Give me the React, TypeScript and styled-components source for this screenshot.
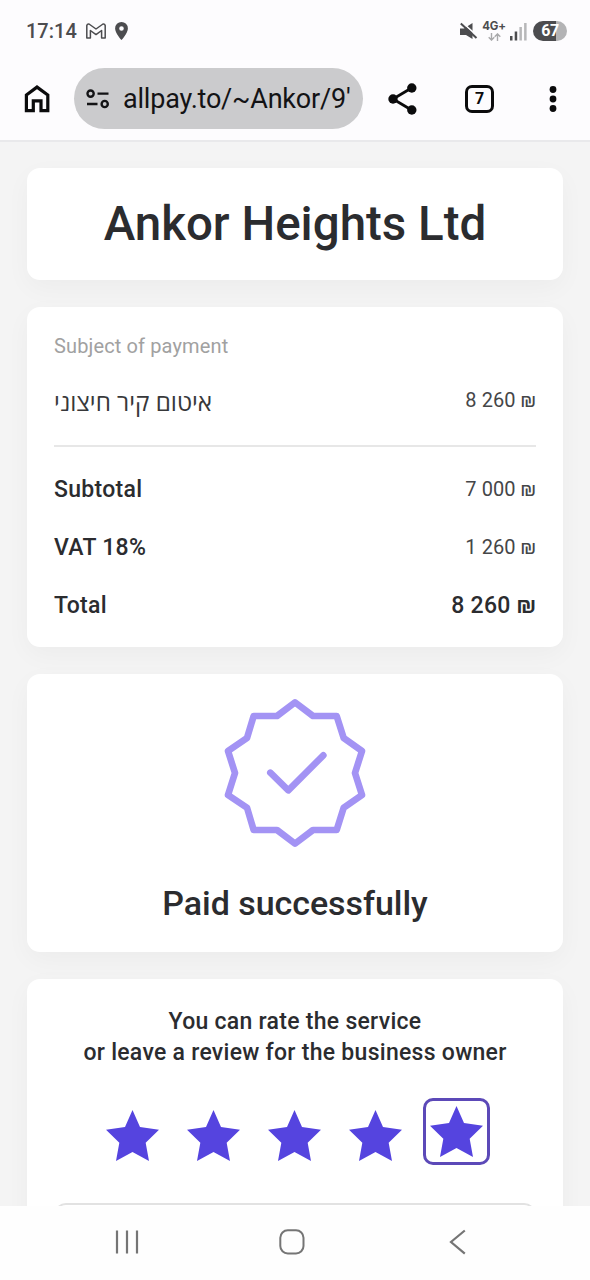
import React from "react";
import styled, { createGlobalStyle } from "styled-components";

const GlobalStyle = createGlobalStyle`
  *, *::before, *::after { box-sizing: border-box; }
  body { margin: 0; background: #f4f4f4; }
  svg { display: block; flex: none; }
`;

const Screen = styled.div`
  width: 590px;
  height: 1280px;
  display: flex;
  flex-direction: column;
  overflow: hidden;
  background: #f4f4f4;
  color: #2b2c2f;
  font-family: Roboto, "Open Sans", sans-serif;
`;

const StatusBar = styled.header`
  flex: none;
  height: 62px;
  padding: 0 23px 0 26px;
  display: flex;
  align-items: center;
  background: #fdfcfe;
  color: #4c4c4f;
`;

const Clock = styled.span`
  width: 51px;
  margin-right: 9px;
  font: 500 20px/24px Roboto, sans-serif;
  white-space: nowrap;
`;

const StatusIcons = styled.div<{ $gap: number }>`
  display: flex;
  align-items: center;
  gap: ${({ $gap }) => $gap}px;
`;

const Spacer = styled.div`
  flex: 1;
`;

const Network = styled.div`
  width: 24px;
  display: flex;
  flex-direction: column;
  align-items: center;
  gap: 1px;
  font: 700 11.5px/11px Inter, sans-serif;
  letter-spacing: -0.2px;
  white-space: nowrap;
`;

const Battery = styled.div`
  width: 34px;
  height: 20px;
  margin-left: 2px;
  border-radius: 10px;
  display: flex;
  align-items: center;
  justify-content: center;
  background: linear-gradient(90deg, #4c4c4f 67%, #b3b3b5 67%);
  color: #fff;
  font: 700 16px/20px Roboto, sans-serif;
  letter-spacing: -0.5px;
`;

const Toolbar = styled.nav`
  flex: none;
  height: 80px;
  padding: 7px 33px 12px 23px;
  display: flex;
  align-items: center;
  background: #fdfcfe;
  border-bottom: 2px solid #e9e9eb;
`;

const AddressBar = styled.div`
  width: 289px;
  height: 61px;
  margin: 0 25px 0 23px;
  padding: 0 10px 0 12px;
  border-radius: 31px;
  display: flex;
  align-items: center;
  gap: 13px;
  background: #cbcbcd;
  color: #131315;
`;

const Url = styled.span`
  flex: 1;
  white-space: nowrap;
  font: 400 27px/36px Roboto, sans-serif;
  letter-spacing: -0.2px;
`;

const TabCounter = styled.div`
  width: 29px;
  height: 28px;
  margin: 0 0 0 48px;
  border: 3px solid #0b0b0c;
  border-radius: 7px;
  display: flex;
  align-items: center;
  justify-content: center;
  color: #0b0b0c;
  font: 700 16px/20px Roboto, sans-serif;
`;

const Page = styled.main`
  flex: 1;
  min-height: 0;
  overflow: hidden;
  padding: 26px 27px 0;
  display: flex;
  flex-direction: column;
  gap: 27px;
`;

const Card = styled.section<{ $height: number; $padding: string }>`
  flex: none;
  height: ${({ $height }) => $height}px;
  padding: ${({ $padding }) => $padding};
  border-radius: 13px;
  background: #fff;
  box-shadow: 0 8px 26px rgba(0, 0, 0, 0.035);
  display: flex;
  flex-direction: column;
`;

const CompanyName = styled.h1`
  margin: 0;
  text-align: center;
  font-size: 47.5px;
  line-height: 56px;
  font-weight: 500;
`;

const Caption = styled.div`
  font-size: 20px;
  line-height: 26px;
  letter-spacing: 0.13px;
  color: #a1a1a1;
`;

const Row = styled.div`
  height: 58px;
  display: flex;
  align-items: center;
  justify-content: space-between;
`;

const ItemRow = styled(Row)`
  margin-top: 12px;
`;

const ItemName = styled.span`
  padding-top: 4px;
  font: 400 24.2px/30px "Open Sans", sans-serif;
  color: #37383a;
`;

const RowLabel = styled.span`
  font-size: 23px;
  font-weight: 500;
  letter-spacing: 0.3px;
`;

const Amount = styled.span<{ $strong?: boolean }>`
  font-size: ${({ $strong }) => ($strong ? 23 : 20)}px;
  font-weight: ${({ $strong }) => ($strong ? 500 : 400)};
  color: ${({ $strong }) => ($strong ? "#2b2c2f" : "#454648")};
  letter-spacing: ${({ $strong }) => ($strong ? 0.3 : 0.05)}px;
  white-space: nowrap;
`;

const Divider = styled.hr`
  width: 100%;
  height: 2px;
  margin: 16px 0 13px;
  border: 0;
  background: #e7e7e7;
`;

const Badge = styled.svg`
  align-self: center;
`;

const PaidTitle = styled.h2`
  margin: 35px 0 0;
  text-align: center;
  font-size: 34px;
  line-height: 40px;
  font-weight: 500;
  letter-spacing: -0.05px;
`;

const RatePrompt = styled.p`
  margin: 0;
  text-align: center;
  font-size: 23px;
  line-height: 31px;
  font-weight: 500;
  letter-spacing: 0.28px;
`;

const Stars = styled.div`
  margin: 30px 1px 0 0;
  display: flex;
  justify-content: center;
  gap: 14px;
`;

const StarButton = styled.button<{ $selected: boolean }>`
  width: 67px;
  height: 67px;
  padding: ${({ $selected }) => ($selected ? "0" : "7px 0 0")};
  display: flex;
  align-items: center;
  justify-content: center;
  background: none;
  border: ${({ $selected }) => ($selected ? "3px solid #5c49b8" : "0")};
  border-radius: 10px;
`;

const ReviewField = styled.div`
  flex: none;
  height: 120px;
  margin-top: 38px;
  border: 2px solid #e2e2e2;
  border-radius: 12px;
`;

const SystemNav = styled.footer`
  flex: none;
  height: 74px;
  padding: 0 0 2px 114px;
  display: flex;
  align-items: center;
  background: #fefefe;
`;

const NavKey = styled.div<{ $width: number }>`
  flex: none;
  width: ${({ $width }) => $width}px;
`;

const MailIcon = () => (
  <svg width="20" height="16" viewBox="0 0 20 16" fill="none" stroke="#4c4c4f" strokeWidth="1.5" strokeLinejoin="round">
    <path d="M.8 15V2.500Q1.200.8 3 1L10 6 17 1Q18.800.8 19.200 2.500V15H15.600V7.500L10 11.600 4.400 7.500V15Z" />
  </svg>
);

const PinIcon = () => (
  <svg width="13" height="18" viewBox="0 0 13 18" fill="#4c4c4f">
    <path fillRule="evenodd" d="M6.500 0A6.400 6.400 0 0 0 .1 6.400C.1 11 6.500 18 6.500 18s6.400-7 6.400-11.600A6.400 6.400 0 0 0 6.500 0Zm0 4.200a2.300 2.300 0 1 1 0 4.600 2.300 2.300 0 0 1 0-4.600Z" />
  </svg>
);

const MuteIcon = () => (
  <svg width="19" height="18" viewBox="0 0 19 18" fill="#4c4c4f">
    <path d="M1 6.500H5L13.500 1V17L7 13H1Z" />
    <path d="M3.200.4 19 14.600" stroke="#fdfcfe" strokeWidth="1.600" />
    <path d="M1.800 1.500 17.500 16" stroke="#4c4c4f" strokeWidth="2" />
  </svg>
);

const DataArrows = () => (
  <svg width="13" height="8" viewBox="0 0 13 8" fill="none" stroke="#a9a9ab" strokeWidth="1.4">
    <path d="M3.500 0V7M.7 4.300 3.500 7.100 6.300 4.300M9.500 8V1M6.700 3.700 9.500.9 12.300 3.700" />
  </svg>
);

const SignalIcon = () => (
  <svg width="17" height="19" viewBox="0 0 17 19" fill="#4c4c4f">
    <rect x="0" y="14" width="2.5" height="4.5" />
    <rect x="4.7" y="9.5" width="2.5" height="9" />
    <rect x="9.4" y="5" width="2.5" height="13.5" fill="#b7b7b9" />
    <rect x="14.1" y="1" width="2.5" height="17.5" fill="#b7b7b9" />
  </svg>
);

const HomeIcon = () => (
  <svg width="28" height="30" viewBox="0 0 28 30" fill="none" stroke="#0b0b0c" strokeWidth="3.200">
    <path d="M3.400 26.700V11L14 3.100 24.800 11V26.700H18V16.800H10.300V26.700Z" />
  </svg>
);

const TuneIcon = () => (
  <svg width="24" height="20" viewBox="0 0 24 20" fill="none" stroke="#131315" strokeWidth="2.4">
    <circle cx="4.6" cy="4.6" r="3.1" />
    <path d="M11.500 4.600H22.500M1 15H11.500" />
    <circle cx="18.7" cy="15" r="3.1" />
  </svg>
);

const ShareIcon = () => (
  <svg width="29" height="32" viewBox="0 0 29 32" fill="#0b0b0c">
    <path d="M23.500 5 5 16 23.500 27" fill="none" stroke="#0b0b0c" strokeWidth="2.8" />
    <circle cx="23.8" cy="5" r="4.7" />
    <circle cx="5" cy="16" r="4.7" />
    <circle cx="23.8" cy="27" r="4.7" />
  </svg>
);

const MoreIcon = () => (
  <svg width="8" height="28" viewBox="0 0 8 28" fill="#0b0b0c">
    <circle cx="4" cy="4.5" r="3.4" />
    <circle cx="4" cy="14" r="3.4" />
    <circle cx="4" cy="23.5" r="3.4" />
  </svg>
);

const StarIcon = () => (
  <svg width="53" height="51" viewBox="0 0 159 153" fill="#5544df">
    <path d="M79.500 0 102 51 159 59 119 98 129 153 79.500 126 30 153 40 98 0 59 57 51Z" />
  </svg>
);

const RecentsIcon = () => (
  <svg width="25" height="26" viewBox="0 0 25 26" stroke="#757575" strokeWidth="2.2">
    <path d="M3 1.500V24.500M13 1.500V24.500M23 1.500V24.500" />
  </svg>
);

const HomeKeyIcon = () => (
  <svg width="26" height="26" viewBox="0 0 26 26" fill="none" stroke="#757575" strokeWidth="2">
    <rect x="1.300" y="1.300" width="23.200" height="23.200" rx="7.500" />
  </svg>
);

const BackIcon = () => (
  <svg width="17" height="26" viewBox="0 0 17 26" fill="none" stroke="#757575" strokeWidth="2.200">
    <path d="M15.800 1.500 2 13 15.800 24.700" />
  </svg>
);

const totals = [
  { label: "Subtotal", amount: "7 000 ₪", strong: false },
  { label: "VAT 18%", amount: "1 260 ₪", strong: false },
  { label: "Total", amount: "8 260 ₪", strong: true },
];

export default function App() {
  return (
    <Screen>
      <GlobalStyle />
      <StatusBar>
        <Clock>17:14</Clock>
        <StatusIcons $gap={9}>
          <MailIcon />
          <PinIcon />
        </StatusIcons>
        <Spacer />
        <StatusIcons $gap={4}>
          <MuteIcon />
          <Network>
            4G+
            <DataArrows />
          </Network>
          <SignalIcon />
          <Battery>67</Battery>
        </StatusIcons>
      </StatusBar>
      <Toolbar>
        <HomeIcon />
        <AddressBar>
          <TuneIcon />
          <Url>allpay.to/~Ankor/9'</Url>
        </AddressBar>
        <ShareIcon />
        <TabCounter>7</TabCounter>
        <Spacer />
        <MoreIcon />
      </Toolbar>
      <Page>
        <Card $height={112} $padding="28px 27px 0">
          <CompanyName>Ankor Heights Ltd</CompanyName>
        </Card>
        <Card $height={340} $padding="26px 27px 0">
          <Caption>Subject of payment</Caption>
          <ItemRow>
            <ItemName dir="rtl">איטום קיר חיצוני</ItemName>
            <Amount>8 260 ₪</Amount>
          </ItemRow>
          <Divider />
          {totals.map(({ label, amount, strong }) => (
            <Row key={label}>
              <RowLabel>{label}</RowLabel>
              <Amount $strong={strong}>{amount}</Amount>
            </Row>
          ))}
        </Card>
        <Card $height={278} $padding="24px 27px 0">
          <Badge width="140" height="150" viewBox="74 83 420 450" overflow="visible" fill="none" stroke="#a393f4" strokeWidth="20" strokeLinejoin="round" strokeLinecap="round">
            <path d="M284 96 338 137H409L430 203 485 242 464 308 485 374 430 412 409 479H338L284 520 230 479H160L140 412 83 374 104 308 83 242 140 203 160 137H230Z" />
            <path d="M210 307 264 360 369 255" />
          </Badge>
          <PaidTitle>Paid successfully</PaidTitle>
        </Card>
        <Card $height={400} $padding="27px 27px 0">
          <RatePrompt>
            You can rate the service
            <br />
            or leave a review for the business owner
          </RatePrompt>
          <Stars>
            {[1, 2, 3, 4, 5].map((value) => (
              <StarButton key={value} $selected={value === 5} aria-label={`${value} stars`}>
                <StarIcon />
              </StarButton>
            ))}
          </Stars>
          <ReviewField />
        </Card>
      </Page>
      <SystemNav>
        <NavKey $width={165}>
          <RecentsIcon />
        </NavKey>
        <NavKey $width={170}>
          <HomeKeyIcon />
        </NavKey>
        <BackIcon />
      </SystemNav>
    </Screen>
  );
}
